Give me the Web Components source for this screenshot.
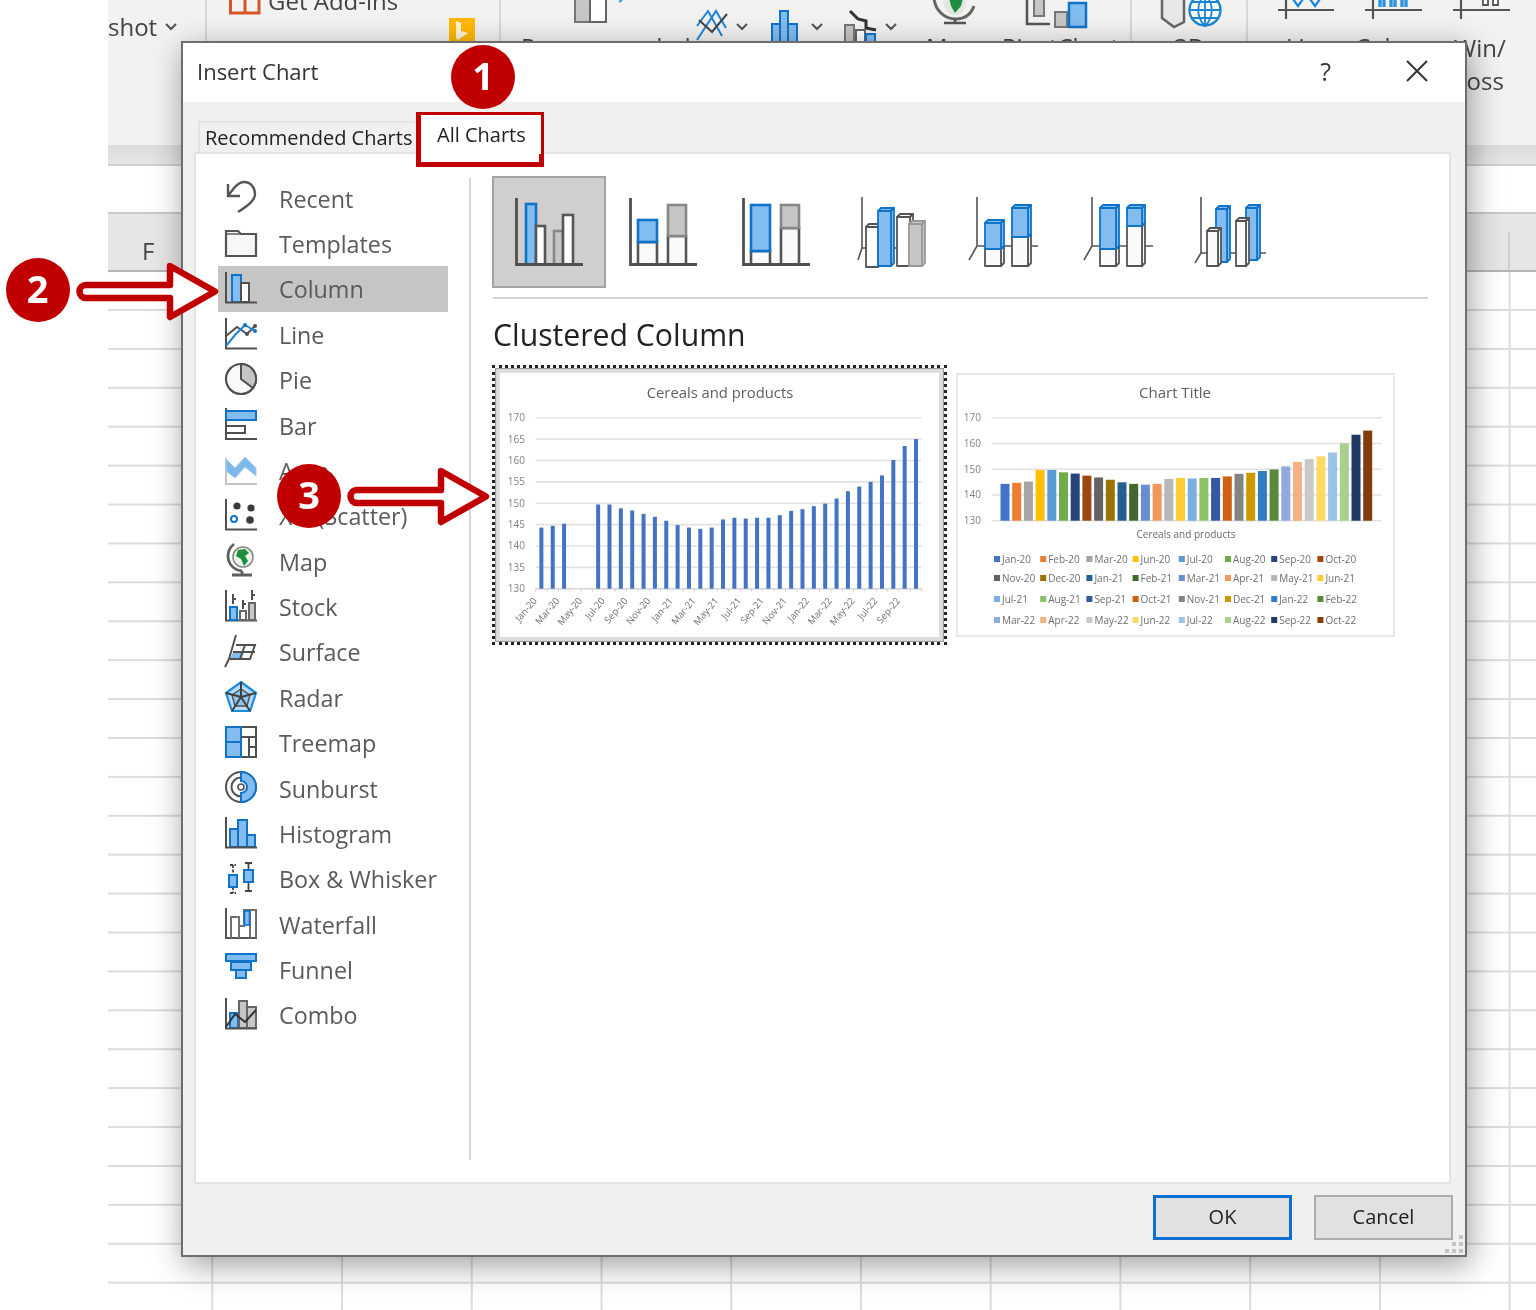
<!DOCTYPE html>
<html lang="en"><head><meta charset="utf-8"><title>Insert Chart</title>
<style>
html,body{margin:0;padding:0;background:#fff}
body{position:relative;width:1536px;height:1310px;overflow:hidden;font-family:"Open Sans","Noto Sans",sans-serif;filter:blur(.4px)}
</style></head><body>
<excel-ribbon></excel-ribbon>
<excel-sheet></excel-sheet>
<insert-chart-dialog>
  <chart-type-item icon="recent">Recent</chart-type-item>
  <chart-type-item icon="templates">Templates</chart-type-item>
  <chart-type-item icon="column" selected>Column</chart-type-item>
  <chart-type-item icon="line">Line</chart-type-item>
  <chart-type-item icon="pie">Pie</chart-type-item>
  <chart-type-item icon="bar">Bar</chart-type-item>
  <chart-type-item icon="area">Area</chart-type-item>
  <chart-type-item icon="scatter">X Y (Scatter)</chart-type-item>
  <chart-type-item icon="map">Map</chart-type-item>
  <chart-type-item icon="stock">Stock</chart-type-item>
  <chart-type-item icon="surface">Surface</chart-type-item>
  <chart-type-item icon="radar">Radar</chart-type-item>
  <chart-type-item icon="treemap">Treemap</chart-type-item>
  <chart-type-item icon="sunburst">Sunburst</chart-type-item>
  <chart-type-item icon="histogram">Histogram</chart-type-item>
  <chart-type-item icon="box">Box &amp; Whisker</chart-type-item>
  <chart-type-item icon="waterfall">Waterfall</chart-type-item>
  <chart-type-item icon="funnel">Funnel</chart-type-item>
  <chart-type-item icon="combo">Combo</chart-type-item>
</insert-chart-dialog>
<red-frame></red-frame>
<call-arrow x="0" y="0"></call-arrow>
<call-arrow x="271" y="205"></call-arrow>
<call-badge x="483" y="76.5">1</call-badge>
<call-badge x="37.5" y="290">2</call-badge>
<call-badge x="309" y="496">3</call-badge>
<script>
const D='#505050',B='#0f73c9',L='#83bcee',G='#c8c6c4';
const FONT='"Open Sans","Noto Sans",sans-serif';
function def(name,build){customElements.define(name,class extends HTMLElement{
  connectedCallback(){ if(this.shadowRoot)return; const s=this.attachShadow({mode:'open'}); s.innerHTML=build(this); }
});}
const axis=`<path d="M1 0V30.5H32" fill="none" stroke="${D}" stroke-width="2"/>`;
const r=(x,y,w,h,f,st,sw=2)=>`<rect x="${x}" y="${y}" width="${w}" height="${h}" fill="${f}" stroke="${st}" stroke-width="${sw}"/>`;
const ICONS={
recent:`<path d="M3 3V15H15M3 15C8 8 13 1 19 1C26 1 30 7 30 13C30 19 24 24 13 31" fill="none" stroke="#555" stroke-width="2.4"/>`,
templates:`<path d="M1 29V4H13L16 7H31V29Z" fill="#f7f7f7" stroke="#555" stroke-width="2.2"/><path d="M1 7H16" stroke="#555" stroke-width="1.4"/>`,
column:`${r(7,3,9,27,L,B)}${r(16,11,8,19,'#fff',D)}${axis}`,
line:`${axis}<path d="M1 18L12 9L22 16L30 8" fill="none" stroke="${D}" stroke-width="2"/><path d="M1 28L10 17L20 7L30 13" fill="none" stroke="#1a86d8" stroke-width="2"/><circle cx="20" cy="7" r="2" fill="${B}"/><circle cx="30" cy="13" r="2" fill="${B}"/><circle cx="30" cy="8" r="2" fill="${D}"/><circle cx="22" cy="16" r="2" fill="${D}"/>`,
pie:`<circle cx="16" cy="16" r="15" fill="#fafafa" stroke="${D}" stroke-width="2.2"/><path d="M16 16V1A15 15 0 0 1 28 25Z" fill="${G}" stroke="${D}" stroke-width="2"/>`,
bar:`<path d="M1 0V31H32" fill="none" stroke="${D}" stroke-width="2"/>${r(1,3,30,9,L,B)}${r(1,18,19,7,'#fff',D)}`,
area:`<path d="M1 4V30H32" fill="none" stroke="#c4c4c4" stroke-width="2"/><path d="M1 5L10 14L20 3L31 14V22L20 13L10 24L1 17Z" fill="#7fb9ea" stroke="#a6d0f2" stroke-width="1"/>`,
scatter:`${axis}<circle cx="12" cy="7" r="3.6" fill="#3a3a3a"/><circle cx="26" cy="9" r="3.6" fill="#3a3a3a"/><circle cx="9" cy="20" r="3" fill="#fff" stroke="${B}" stroke-width="2"/><circle cx="25" cy="21" r="3.8" fill="#3a3a3a"/>`,
map:`<path d="M9 0A15 15 0 0 0 17 27M7 31H27M17 27V31" fill="none" stroke="#5f5f5f" stroke-width="2.8"/><circle cx="18" cy="13" r="10" fill="#e9f4ea" stroke="#8a8a8a" stroke-width="1.6"/><path d="M13 6L20 5L24 9L20 12L23 17L19 22L16 15L11 12Z" fill="#1f8f3f"/>`,
stock:`${axis}${r(5,17,7,13,L,B)}${r(15,21,6,9,'#fff','#666')}${r(24,13,6,17,G,'#666')}<path d="M8 4V14M8 9H11M18 10V19M18 14H21M27 0V10M27 5H30" fill="none" stroke="${D}" stroke-width="2"/>`,
surface:`<path d="M11 10H30L25 24H5Z" fill="#fff"/><path d="M8 17H19L17 24H5Z" fill="${L}"/><path d="M11 0L4 24L0 32M11 10H30L25 24H5M8 17H30M20 10L15 24" fill="none" stroke="${D}" stroke-width="2"/>`,
radar:`<polygon points="16,1 31,12 25,30 7,30 1,12" fill="#b8dcf7" stroke="#1b8ad9" stroke-width="2.2"/><polygon points="16,8 25,14 22,25 10,25 7,14" fill="#8fc6ef" stroke="${D}" stroke-width="1.4"/><path d="M16 16V1M16 16L31 12M16 16L25 30M16 16L7 30M16 16L1 12" stroke="#3f3f3f" stroke-width="2"/>`,
treemap:`${r(1,1,30,30,'#fff',D)}${r(1,1,15,30,L,B)}<path d="M1 16H16" stroke="${B}" stroke-width="2"/><path d="M16 11H31M24 11V31M24 21H31" stroke="${D}" stroke-width="2"/>`,
sunburst:`<circle cx="16" cy="16" r="15" fill="#fff" stroke="${D}" stroke-width="2"/><circle cx="16" cy="16" r="9.5" fill="none" stroke="${D}" stroke-width="2"/><path d="M16 1A15 15 0 0 1 16 31L16 22A6 6 0 0 0 16 10Z" fill="${L}" stroke="${B}" stroke-width="2"/><circle cx="16" cy="16" r="3" fill="#fff" stroke="${D}" stroke-width="1.6"/>`,
histogram:`${r(5,12,8,18,L,B)}${r(13,3,9,27,L,B)}${r(22,18,8,12,L,B)}${axis}`,
box:`<path d="M5 3H11M8 3V13M5 31H11M8 25V31" fill="none" stroke="#444" stroke-width="1.8" stroke-dasharray="3 1.5"/>${r(4,13,8,12,L,B)}<path d="M20 1H27M23.5 1V8M20 29H27M23.5 20V29" fill="none" stroke="#444" stroke-width="1.8"/>${r(19,8,9,12,L,B)}`,
waterfall:`<path d="M1 1V31H32" fill="none" stroke="#555" stroke-width="2"/><path d="M6 31V10H14V31M14 19H19V3H31V31M25 3V31" fill="none" stroke="#707070" stroke-width="2"/><rect x="19.5" y="4" width="5" height="14" fill="${L}" stroke="${B}" stroke-width="1.6"/>`,
funnel:`${r(1,1,30,7,L,B)}${r(6,9,20,8,L,B)}${r(11,17,10,8,L,B)}`,
combo:`${r(5,15,8,15,L,B)}${r(14,3,8,27,G,'#666')}${r(22,9,9,21,G,'#666')}${axis}<path d="M1 29L10 16L20 24L31 12" fill="none" stroke="#333" stroke-width="2"/>`
};
const bar2=(x,y,w,h,f,st)=>r(x,y,w,h,f,st,2.6);
function b3(x,y,w,h,f,st,d=3){return `<g stroke="${st}" stroke-width="1.8" stroke-linejoin="round"><polygon points="${x},${y} ${x+d},${y-d} ${x+w+d},${y-d} ${x+w},${y}" fill="${f==='#fff'?'#fff':f}"/><polygon points="${x+w},${y} ${x+w+d},${y-d} ${x+w+d},${y+h-d} ${x+w},${y+h}" fill="${f==='#fff'?'#f4f4f4':f}"/><rect x="${x}" y="${y}" width="${w}" height="${h}" fill="${f}"/></g>`;}
const ax2=`<path d="M3.5 2V68.5H70" fill="none" stroke="#4f4f4f" stroke-width="2.8"/>`;
const DK='#555';
const SUBS=[
 `${bar2(13,8,10,60.5,L,B)}${bar2(23,30,9,38.5,'#fff',DK)}${bar2(41,35,9,33.5,G,'#888')}${bar2(50,19,10,49.5,'#fff',DK)}${ax2}`,
 `${bar2(11,46,19,22.5,'#fafafa',DK)}${bar2(11,24,19,22,L,B)}${bar2(41,40,18,28.5,'#fafafa',DK)}${bar2(41,9,18,31,G,'#888')}${ax2}`,
 `${bar2(11,55,19,13.5,'#fafafa',DK)}${bar2(11,9,19,46,L,B)}${bar2(41,32,18,36.5,'#fafafa',DK)}${bar2(41,9,18,23,G,'#888')}${ax2}`,
 `<path d="M8 1V52L4 64" fill="none" stroke="#555" stroke-width="1.6"/><path d="M8 52H70" stroke="#555" stroke-width="1.6"/>${b3(12,31,12,40,'#fff',DK)}${b3(24,15,13,55,L,B)}${b3(43,21,13,49,'#fff',DK)}${b3(55,28,13,42,G,'#999')}`,
 `<path d="M9 1V50L1 64M9 50H70" fill="none" stroke="#555" stroke-width="1.6"/>${b3(17,53,16,17,'#fafafa',DK)}${b3(17,27,16,26,L,B)}${b3(44,41,16,29,'#fafafa',DK)}${b3(44,12,16,29,L,B)}`,
 `<path d="M10 1V50L2 64M10 50H71" fill="none" stroke="#555" stroke-width="1.6"/>${b3(18,53,16,17,'#fafafa',DK)}${b3(18,12,16,41,L,B)}${b3(45,30,15,40,'#fafafa',DK)}${b3(45,12,15,18,L,B)}`,
 `<path d="M5 1V57L-1 67M5 57H70" fill="none" stroke="#555" stroke-width="1.6"/>${b3(20,13,11,53,L,B)}${b3(50,12,11,52,L,B)}${b3(11,35,11,35,'#fafafa',DK)}${b3(40,25,10,45,'#fafafa',DK)}`
];
const VALS=[144.3,144.7,145.2,149.7,149.7,148.8,148.3,147.5,146.8,145.9,144.9,144.3,144,144.3,146.2,146.6,146.4,146.6,146.6,147.2,148.2,148.6,149.3,149.9,151.1,152.8,153.9,155,156.5,160.1,163.4,165];
const MON=['Jan','Feb','Mar','Apr','May','Jun','Jul','Aug','Sep','Oct','Nov','Dec'];
const RT=(x,s)=>`<text x="${x}" y="56" font-size="24" fill="#444" font-family='"Open Sans",sans-serif'>${s}</text>`;

def('excel-ribbon',()=>`<style>
:host{display:flex;margin-left:108px;height:145px;background:#f3f2f1;overflow:hidden;color:#444;font:24px/33px ${FONT}}
.g{flex:none;height:145px;border-right:2px solid #d9d7d5;box-sizing:content-box;position:relative}
svg{display:block}
.shot{display:flex;align-items:center;gap:8px;padding-top:10px}
</style>
<div class="g" style="width:97px"><div class="shot">shot<svg width="12" height="8" viewBox="0 0 12 8"><path d="M1 1L6 6L11 1" fill="none" stroke="#555" stroke-width="2"/></svg></div></div>
<div class="g" style="width:292px"><svg width="292" height="41" viewBox="207 0 292 41"><path d="M230.500 -5H259V13H230.500ZM245 -5V13" fill="none" stroke="#d8552a" stroke-width="3"/><text x="268" y="10" font-size="24" fill="#444" font-family='"Open Sans",sans-serif'>Get Add-ins</text><rect x="449" y="18" width="26" height="23" fill="#ffb900"/><path d="M456 21L461 23V31L468 33L458 40L456 38Z" fill="#fff5d6"/></svg></div>
<div class="g" style="width:629px"><svg width="629" height="41" viewBox="501 0 629 41">
<rect x="575" y="-5" width="17" height="27" fill="${G}" stroke="#777" stroke-width="2"/><rect x="590" y="-5" width="16" height="27" fill="#fff" stroke="#666" stroke-width="2"/><path d="M619 2L622 0" stroke="#2d95e0" stroke-width="2"/>
<path d="M697 40L716 11L726 28M697 26L708 11L722 36" fill="none" stroke="#1a86d8" stroke-width="2"/><path d="M699 20L712 32L727 14" fill="none" stroke="#444" stroke-width="2"/>
<path d="M737 24L742 29L747 24M812 24L817 29L822 24M886 24L891 29L896 24" fill="none" stroke="#555" stroke-width="2"/>
<rect x="772" y="24" width="8" height="20" fill="${L}" stroke="${B}" stroke-width="2"/><rect x="780" y="11" width="8" height="33" fill="${L}" stroke="${B}" stroke-width="2"/><rect x="788" y="24" width="9" height="20" fill="${L}" stroke="${B}" stroke-width="2"/>
<path d="M850 11L858 19L866 21V28L876 30" fill="none" stroke="#333" stroke-width="3"/><rect x="845" y="25" width="9" height="20" fill="${G}" stroke="#777" stroke-width="2"/><rect x="856" y="30" width="9" height="15" fill="#fff" stroke="#666" stroke-width="2"/><rect x="866" y="34" width="9" height="10" fill="${L}" stroke="${B}" stroke-width="2"/>
<path d="M934 -2C935 10 944 19 956 19C965 19 971 14 974 6" fill="none" stroke="#666" stroke-width="3"/><path d="M955 19V23M944 23H966" stroke="#555" stroke-width="2.500"/><circle cx="955" cy="4" r="11" fill="#dfe9df"/><path d="M949 -2L963 -2L961 6L955 13L951 6Z" fill="#1f8f3f"/>
<path d="M1027 -2V24H1050" fill="none" stroke="#555" stroke-width="2.500"/><rect x="1034" y="-3" width="10" height="19" fill="${G}" stroke="#777" stroke-width="2"/><rect x="1055" y="12" width="12" height="15" fill="${G}" stroke="#777" stroke-width="2"/><rect x="1069" y="3" width="17" height="24" fill="${L}" stroke="${B}" stroke-width="2.500"/>
${RT(521,'Recommended')}${RT(926,'Maps')}${RT(1002,'PivotChart')}
</svg></div>
<div class="g" style="width:114px"><svg width="114" height="41" viewBox="1132 0 114 41"><path d="M1162 -2V18L1174 27L1184 22V-2" fill="#e8e8e8" stroke="#666" stroke-width="2.500"/><circle cx="1205" cy="10" r="15.500" fill="#fff" stroke="#1a86d8" stroke-width="2.400"/><path d="M1190 10H1221M1205 -5V26M1192 2H1218M1192 18H1218M1205 -5C1196 3 1196 17 1205 26C1214 17 1214 3 1205 -5" fill="none" stroke="#1a86d8" stroke-width="1.800"/>${RT(1174,'3D')}</svg></div>
<div class="g" style="width:288px;border:0"><svg width="288" height="41" viewBox="1248 0 288 41" style="margin-bottom:-41px">
<path d="M1278 10H1334M1286 0V19M1365 10H1422M1373 0V19M1453 10H1510M1461 0V19" fill="none" stroke="#555" stroke-width="2.200"/>
<path d="M1293 -1L1298 6L1303 -1M1310 -1L1315 6L1320 -1" fill="none" stroke="#1a86d8" stroke-width="2.200"/>
<path d="M1380 -1V7M1384 -1V7M1391 -1V7M1395 -1V7M1402 -1V7M1406 -1V7" stroke="#2d95e0" stroke-width="3.400"/>
<path d="M1483 -1H1488V5H1483ZM1493 -1H1498V5H1493Z" fill="#fff" stroke="#555" stroke-width="1.800"/>
${RT(1286,'Line')}${RT(1355,'Column')}
</svg><div style="margin:31px 0 0 206px;line-height:33px">Win/<br>Loss</div></div>`);

def('excel-sheet',()=>`<style>
:host{display:block;margin-left:108px;height:1165px;overflow:hidden;color:#444}
.band{height:19px;background:linear-gradient(#dcdcdc,#e6e6e6);border-bottom:2px solid #cfcfcf}
.fx{height:46px;background:#fff;border-bottom:2px solid #c9c9c9}
.head{height:56px;background:#e6e6e6;border-bottom:2px solid #b4b4b4;display:flex;align-items:center;position:relative;font:24px/1 ${FONT}}
.head span{margin:17px 0 0 34px}
.tick{width:2px;height:38px;background:#cfcfcf;margin:18px 0 0 1354px;flex:none}
.grid{height:1040px;background-color:#fff;
 background-image:linear-gradient(#dcdcdc 2px,transparent 2px),linear-gradient(90deg,#dcdcdc 2px,transparent 2px);
 background-size:100% 38.92px,129.74px 100%;background-position:0 37px,103.3px 0;}
</style><div class="band"></div><div class="fx"></div><div class="head"><span>F</span><div class="tick"></div></div><div class="grid"></div>`);

def('chart-type-item',h=>`<style>
:host{display:flex;align-items:center;height:45.39px;width:230px;padding:2px 0 0 7px;box-sizing:border-box;gap:22px;color:#5a5a5a;font:23.300px/1 ${FONT};white-space:nowrap;background:${h.hasAttribute('selected')?'#c6c5c3':'transparent'}}
svg{flex:none;display:block;overflow:visible;margin-top:-4px}
</style><svg width="32" height="32" viewBox="0 0 32 32">${ICONS[h.getAttribute('icon')]}</svg><slot></slot>`);

def('chart-subtype',h=>`<style>
:host{display:flex;align-items:center;justify-content:center;flex:none;width:113.8px;height:112px;box-sizing:border-box}
:host([selected]){background:#d0cfcd;border:2px solid #a3a3a1}
svg{display:block;overflow:visible;flex:none}
</style><svg width="72" height="72" viewBox="0 0 72 72">${SUBS[+h.getAttribute('n')]}</svg>`);

def('clustered-preview',()=>{
 const x0=535.7,w=386,ct=w/34,top=417.7,bot=588.7;
 const Y=v=>bot-(v-130)/40*(bot-top);
 let grid='',yl='',bars='',xl='',ticks='';
 for(let i=0;i<=8;i++){const v=130+i*5,y=Y(v);grid+=`<path d="M${x0} ${y}H${x0+w}" stroke="${i?'#e2e2e2':'#d4d4d4'}" stroke-width="1.600"/>`;yl+=`<text x="525" y="${y+3.5}" text-anchor="end" font-size="10" fill="#808080">${v}</text>`;}
 let k=0;for(let c=0;c<34;c++){ if(c==3||c==4)continue; const v=VALS[k++],cx=x0+ct*(c+.5);bars+=`<rect x="${cx-2}" y="${Y(v)}" width="4" height="${bot-Y(v)}" fill="#4472c4"/>`;}
 for(let c=0;c<=34;c++){ticks+=`<path d="M${x0+ct*c} ${bot}v3" stroke="#d4d4d4"/>`;}
 for(let c=0;c<34;c+=2){const cx=x0+ct*(c+.5)-4,y=601;const m=c%12,yr=20+Math.floor(c/12);xl+=`<text transform="translate(${cx} ${y}) rotate(-50)" text-anchor="end" font-size="9.500" fill="#6e6e6e">${MON[m]}-${yr}</text>`;}
 return `<style>:host{display:block;flex:none;width:455px;height:280px;box-sizing:border-box;border:3px dotted #222;background:#fff}svg{display:block;filter:blur(.3px)}text{font-family:${FONT}}</style>
 <svg width="449" height="274" viewBox="495 368 449 274">
 <rect x="497.500" y="370.500" width="444" height="269" fill="#fff" stroke="#dedede" stroke-width="5"/><rect x="495.500" y="368.500" width="448" height="273" fill="none" stroke="#9a9a9a" stroke-width="1.200"/>
 ${grid}${ticks}${bars}${yl}${xl}
 <text x="720" y="397.500" text-anchor="middle" font-size="14.800" fill="#5f5f5f">Cereals and products</text></svg>`;
});

def('series-preview',()=>{
 const COL=['#4472c4','#ed7d31','#a5a5a5','#ffc000','#5b9bd5','#70ad47','#264478','#9e480e','#636363','#997300','#255e91','#43682b','#698ed0','#f1975a','#b7b7b7','#ffcd33','#7cafdd','#8cc168','#335aa1','#d26012','#848484','#cc9a00','#327dc2','#5a8a39','#8faadc','#f4b183','#c9c9c9','#ffd966','#9dc3e6','#a9d18e','#1f3864','#843c0c'];
 const top=417.7,bot=520.7,Y=v=>bot-(v-130)/40*(bot-top);
 let g='',bars='',leg='';
 for(let i=0;i<=4;i++){const v=130+i*10,y=Y(v);g+=`<path d="M991.700 ${y}H1381.700" stroke="#e2e2e2" stroke-width="1.600"/><text x="981" y="${y+3.5}" text-anchor="end" font-size="10" fill="#808080">${v}</text>`;}
 VALS.forEach((v,i)=>{const cx=950+(165+i*35.1)/3;bars+=`<rect x="${cx-4.500}" y="${Y(v)}" width="9" height="${bot-Y(v)}" fill="${COL[i]}"/>`;});
 const idx=[];for(let c=0;c<34;c++){if(c==3||c==4)continue;idx.push(c);}
 const rows=[559,578,599,620];
 idx.forEach((c,i)=>{const row=Math.floor(i/8),col=i%8,x=994+col*46.2,y=rows[row];leg+=`<rect x="${x}" y="${y-3}" width="6" height="6" fill="${COL[i]}"/><text x="${x+8}" y="${y+3.500}" font-size="10" fill="#6e6e6e">${MON[c%12]}-${20+Math.floor(c/12)}</text>`;});
 return `<style>:host{display:block;flex:none;width:439px;height:264px;box-sizing:border-box;margin-top:8px;border:2px solid #e8e8e8;background:#fff}svg{display:block;filter:blur(.3px)}text{font-family:${FONT}}</style>
 <svg width="435" height="260" viewBox="958 375 435 260">${g}${bars}
 <text x="1175" y="397.500" text-anchor="middle" font-size="15" fill="#5f5f5f">Chart Title</text>
 <text x="1186" y="538" text-anchor="middle" font-size="10" fill="#666">Cereals and products</text>${leg}</svg>`;
});

def('dialog-button',h=>`<style>
:host{display:flex;align-items:center;justify-content:center;width:139px;height:45px;box-sizing:border-box;background:#e1e1e1;border:2px solid #adadad;font:20px/1 ${FONT};color:#222;padding-bottom:2px}
:host([primary]){border:3px solid #0a6fd0}
</style><slot></slot>`);

def('insert-chart-dialog',()=>`<style>
:host{position:absolute;left:181px;top:41px;width:1286px;height:1216px;box-sizing:border-box;border:2px solid #6e6e6e;background:#f0f0f0;display:flex;flex-direction:column;box-shadow:3px 8px 30px rgba(0,0,0,.38);color:#222;font-family:${FONT}}
.title{flex:none;height:59px;background:#fff;display:flex;align-items:center;padding:0 37px 0 14px;font-size:22px;color:#333}
.title>span:first-child{margin-top:-3px}
.title .sp{flex:1}
.q{margin:-4px 75px 0 0;font-size:25px}
.title svg{margin-top:-3px}
.tabs{flex:none;height:50px;display:flex;align-items:flex-end;padding-left:15px;position:relative;z-index:1;font-size:20px;white-space:nowrap}
.t1{width:217px;height:31px;box-sizing:border-box;border:solid #e3e3e3;border-width:2px 0 0 2px;padding:2px 0 0 5px;line-height:26px}
.t2{width:120px;height:39px;margin:0 0 -2px 6px;background:#fff;box-sizing:border-box;padding:5px 0 0 16px;line-height:30px}
.panel{flex:none;height:1032px;margin:0 14px 0 11px;box-sizing:border-box;border:2px solid #e3e3e3;background:#fff;display:flex;align-items:flex-start}
.side{flex:none;width:275px;height:982px;margin-top:24px;box-sizing:border-box;border-right:2px solid #d6d6d6;padding-left:22px}
.list{margin-top:-2.300px}
.main{flex:none;padding:22px 0 0 21px;width:955px}
.row{display:flex}
.rule{width:935px;height:2px;background:#d4d4d4;margin:9px 0 0 1px}
h2{margin:0;font:400 30.200px/1 ${FONT};color:#222;padding:21px 0 0 1px;height:35px;white-space:nowrap}
.charts{display:flex;align-items:flex-start;gap:9px;margin-top:10px}
.foot{flex:1;display:flex;justify-content:flex-end;gap:22px;padding:11px 12px 0 0;position:relative}
.grip{position:absolute;right:2px;bottom:2px}
</style>
<div class="title"><span>Insert Chart</span><span class="sp"></span><span class="q">?</span><svg width="22" height="22" viewBox="0 0 22 22"><path d="M1 1L21 21M21 1L1 21" stroke="#333" stroke-width="2"/></svg></div>
<div class="tabs"><div class="t1">Recommended Charts</div><div class="t2">All Charts</div></div>
<div class="panel">
 <div class="side"><div class="list"><slot></slot></div></div>
 <div class="main">
  <div class="row"><chart-subtype n="0" selected></chart-subtype><chart-subtype n="1"></chart-subtype><chart-subtype n="2"></chart-subtype><chart-subtype n="3"></chart-subtype><chart-subtype n="4"></chart-subtype><chart-subtype n="5"></chart-subtype><chart-subtype n="6"></chart-subtype></div>
  <div class="rule"></div>
  <h2>Clustered Column</h2>
  <div class="charts"><clustered-preview></clustered-preview><series-preview></series-preview></div>
 </div>
</div>
<div class="foot"><dialog-button primary>OK</dialog-button><dialog-button>Cancel</dialog-button>
<svg class="grip" width="18" height="18" viewBox="0 0 18 18" fill="#c4c4c4"><rect x="14" y="0" width="4" height="4"/><rect x="7" y="7" width="4" height="4"/><rect x="14" y="7" width="4" height="4"/><rect x="0" y="14" width="4" height="4"/><rect x="7" y="14" width="4" height="4"/><rect x="14" y="14" width="4" height="4"/></svg></div>`);

def('red-frame',()=>`<style>:host{position:absolute;left:416px;top:112px;width:128px;height:55px;box-sizing:border-box;border:5px solid #c00000}</style>`);

def('call-badge',h=>`<style>:host{position:absolute;left:${h.getAttribute('x')-32}px;top:${h.getAttribute('y')-32}px;width:64px;height:64px;box-sizing:border-box;padding-bottom:4px;border-radius:50%;background:#c00000;color:#fff;display:flex;align-items:center;justify-content:center;font:700 38px/1 ${FONT}}</style><slot></slot>`);

def('call-arrow',h=>`<style>:host{position:absolute;left:${70+ +h.getAttribute('x')}px;top:${258+ +h.getAttribute('y')}px;width:152px;height:68px}svg{display:block}</style>
<svg width="152" height="68" viewBox="70 258 152 68"><path d="M86 285H170V266L215 291.500L170 317V298H86A6.500 6.500 0 0 1 86 285Z" fill="#fff" stroke="#c00000" stroke-width="6.500" stroke-linejoin="round"/></svg>`);
</script>
</body></html>
